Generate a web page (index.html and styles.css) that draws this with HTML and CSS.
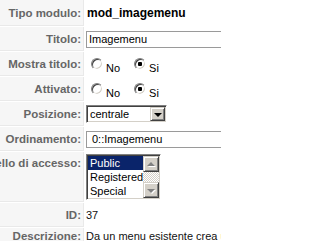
FILE: index.html
```html
<!DOCTYPE html>
<html lang="it">
<head>
<meta charset="utf-8">
<title>Modulo</title>
<link rel="stylesheet" href="styles.css">
</head>
<body>
<div class="form">
  <div class="key">Tipo modulo:</div>
  <div class="val"><strong class="modname">mod_imagemenu</strong></div>

  <div class="key">Titolo:</div>
  <div class="val"><input class="text" type="text" value="Imagemenu"></div>

  <div class="key">Mostra titolo:</div>
  <div class="val radios">
    <input class="radio" type="radio" name="showtitle" id="st0"><label for="st0">No</label>
    <input class="radio" type="radio" name="showtitle" id="st1" checked><label for="st1">Si</label>
  </div>

  <div class="key">Attivato:</div>
  <div class="val radios">
    <input class="radio" type="radio" name="published" id="pb0"><label for="pb0">No</label>
    <input class="radio" type="radio" name="published" id="pb1" checked><label for="pb1">Si</label>
  </div>

  <div class="key">Posizione:</div>
  <div class="val">
    <div class="select">
      <span class="select-text">centrale</span>
      <span class="btn"><span class="arrow-down"></span></span>
    </div>
  </div>

  <div class="key">Ordinamento:</div>
  <div class="val"><div class="text ordering">0::Imagemenu</div></div>

  <div class="key top">Livello di accesso:</div>
  <div class="val">
    <div class="listbox">
      <ul class="options">
        <li class="selected">Public</li>
        <li>Registered</li>
        <li>Special</li>
      </ul>
      <div class="scrollbar">
        <span class="btn sb"><span class="arrow-up dis"></span></span>
        <span class="track"></span>
        <span class="btn sb"><span class="arrow-down dis"></span></span>
      </div>
    </div>
  </div>

  <div class="key">ID:</div>
  <div class="val plain">37</div>

  <div class="key top desc">Descrizione:</div>
  <div class="val plain top desc">Da un menu esistente crea un menu con immagini</div>
</div>
</body>
</html>
```

FILE: styles.css
```css
html, body {
  margin: 0;
  padding: 0;
  background: #fff;
  overflow: hidden;
}

body {
  font-family: "Liberation Sans", Arial, sans-serif;
  font-size: 11px;
  color: #000;
}

.form {
  display: grid;
  grid-template-columns: 150px 136px;
  grid-template-rows: 26px repeat(5, 24px) 50px 24px 40px;
  gap: 1px;
  margin-left: -66px;
  width: 287px;
}

.key {
  box-sizing: border-box;
  background: #f6f6f6;
  border-right: 1px solid #e9e9e9;
  border-bottom: 1px solid #e9e9e9;
  display: flex;
  align-items: center;
  justify-content: flex-end;
  padding-right: 2px;
  font-size: 11.5px;
  font-weight: bold;
  color: #666;
  white-space: nowrap;
}

.key.top {
  align-items: flex-start;
  padding-top: 5px;
}

.key.desc {
  padding-top: 2px;
}

.val {
  display: flex;
  align-items: center;
  padding-left: 1px;
  white-space: nowrap;
  min-width: 0;
  overflow: hidden;
}

.val.top {
  align-items: flex-start;
}

.val.desc {
  padding-top: 2px;
  padding-left: 1px;
}

.plain {
  color: #111;
}

.modname {
  font-size: 12px;
  font-weight: bold;
  padding-left: 1px;
}

.text {
  box-sizing: border-box;
  flex: none;
  width: 300px;
  height: 17px;
  margin: 0;
  border: 1px solid #9a9a9a;
  padding: 0 2px;
  font: 11px "Liberation Sans", Arial, sans-serif;
  color: #000;
  background: #fff;
  outline: none;
}

.ordering {
  display: flex;
  align-items: center;
  padding-left: 5px;
}

/* radio buttons */
.radios {
  padding-left: 6px;
}

.radio {
  appearance: none;
  -webkit-appearance: none;
  box-sizing: border-box;
  flex: none;
  width: 12px;
  height: 12px;
  margin: 0 3px 0 0;
  border-radius: 50%;
  border: 1px solid;
  border-color: #808080 #ffffff #ffffff #808080;
  box-shadow: inset 1px 1px 0 #404040, inset -1px -1px 0 #d4d0c8;
  background: #fff;
}

.radio:checked {
  background: radial-gradient(circle, #000 0 2px, #fff 2.5px);
}

.radios label {
  padding-top: 7px;
  margin-right: 14px;
}

/* classic select */
.select {
  box-sizing: border-box;
  display: flex;
  flex: none;
  width: 81px;
  height: 18px;
  border: 1px solid;
  border-color: #808080 #ffffff #ffffff #808080;
  box-shadow: inset 1px 1px 0 #404040, inset -1px -1px 0 #d4d0c8;
  padding: 1px;
  background: #fff;
}

.select-text {
  flex: 1;
  display: flex;
  align-items: center;
  padding-left: 2px;
}

.btn {
  box-sizing: border-box;
  display: flex;
  align-items: center;
  justify-content: center;
  width: 15px;
  height: 14px;
  background: #d4d0c8;
  border: 1px solid;
  border-color: #d4d0c8 #404040 #404040 #d4d0c8;
  box-shadow: inset 1px 1px 0 #fff, inset -1px -1px 0 #808080;
}

.arrow-down {
  width: 0;
  height: 0;
  border-left: 4px solid transparent;
  border-right: 4px solid transparent;
  border-top: 4px solid #000;
  margin-top: 1px;
}

.arrow-up {
  width: 0;
  height: 0;
  border-left: 4px solid transparent;
  border-right: 4px solid transparent;
  border-bottom: 4px solid #000;
}

.arrow-up.dis {
  border-bottom-color: #808080;
  filter: drop-shadow(1px 1px 0 #fff);
}

.arrow-down.dis {
  border-top-color: #808080;
  filter: drop-shadow(1px 1px 0 #fff);
}

/* list box */
.listbox {
  box-sizing: border-box;
  display: flex;
  flex: none;
  width: 75px;
  height: 46px;
  border: 1px solid;
  border-color: #808080 #ffffff #ffffff #808080;
  box-shadow: inset 1px 1px 0 #404040, inset -1px -1px 0 #d4d0c8;
  padding: 1px;
  background: #fff;
}

.options {
  flex: 1;
  list-style: none;
  margin: 0;
  padding: 0;
}

.options li {
  height: 14px;
  line-height: 14px;
  padding-left: 2px;
}

.options li.selected {
  background: #0a246a;
  color: #fff;
}

.scrollbar {
  display: flex;
  flex-direction: column;
  width: 16px;
}

.btn.sb {
  width: 16px;
  height: 16px;
}

.track {
  flex: 1;
  background: repeating-conic-gradient(#d4d0c8 0 25%, #ffffff 0 50%) 0 0 / 2px 2px;
}
```
